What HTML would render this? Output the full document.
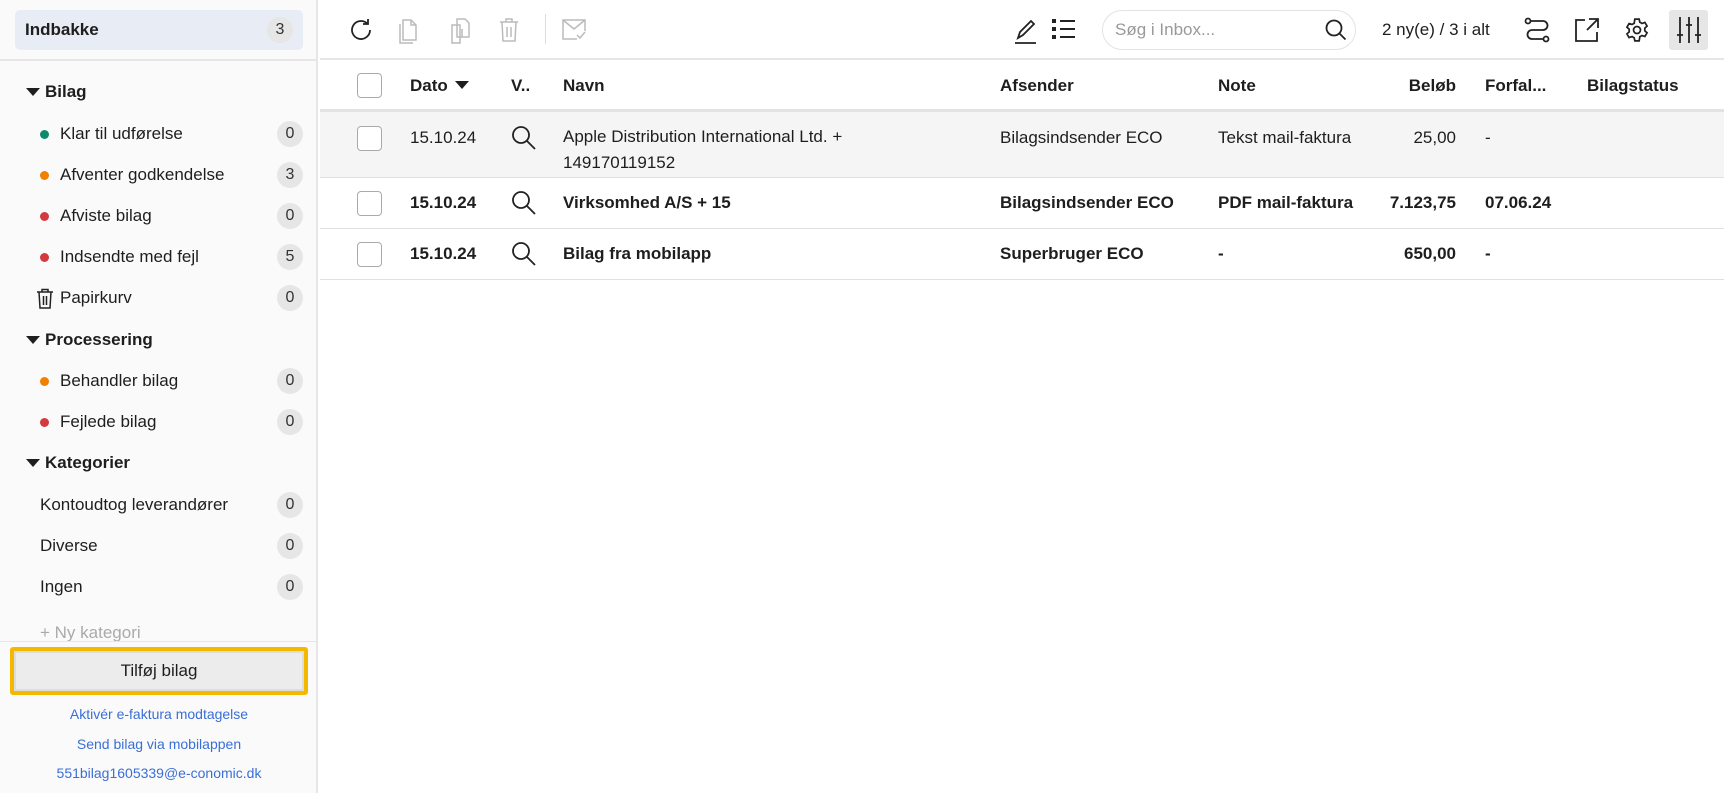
<!DOCTYPE html>
<html><head><meta charset="utf-8"><style>
*{box-sizing:border-box;margin:0;padding:0}
body{width:1724px;height:793px;overflow:hidden;font-family:"Liberation Sans",Arial,sans-serif;color:#1e1e1e;background:#fff;position:relative}
.sb{position:absolute;left:0;top:0;width:318px;height:793px;background:#fafafa;border-right:2px solid #e6e6e6}
.inb{position:absolute;left:15px;top:10px;width:288px;height:40px;background:#e8ecf5;border-radius:5px;font-weight:bold;font-size:17px;line-height:40px;padding-left:10px}
.badge{position:absolute;right:10px;top:50%;margin-top:-13px;width:26px;height:26px;border-radius:13px;background:#e6e6e6;text-align:center;line-height:26px;font-size:16px;font-weight:normal;color:#333}
.hr1{position:absolute;left:0;top:59px;width:316px;height:2px;background:#e6e6e6}
.it{position:absolute;left:0;width:303px;height:30px;font-size:17px;line-height:30px}
.it .badge{right:0}
.hd{font-weight:bold;padding-left:45px}
.hd:before{content:"";position:absolute;left:26px;top:11px;border-left:7px solid transparent;border-right:7px solid transparent;border-top:8px solid #1e1e1e}
.dot{padding-left:60px}
.dot:before{content:"";position:absolute;left:40px;top:11px;width:9px;height:9px;border-radius:5px;background:var(--c)}
.cat{padding-left:40px}
.btm{position:absolute;left:0;top:641px;width:316px;height:152px;background:#fafafa;border-top:1px solid #e6e6e6}
.btn{position:absolute;left:10px;top:5px;width:298px;height:48px;border:4px solid #f5b800;border-radius:3px;background:#ececec;box-shadow:inset 0 0 0 2px #ddd;text-align:center;line-height:40px;font-size:17px}
.lk{position:absolute;left:0;width:318px;text-align:center;color:#3a6fd8;font-size:14px}
.main{position:absolute;left:320px;top:0;right:0}
.tb{position:absolute;left:0;top:0;width:1404px;height:60px;border-bottom:2px solid #e6e6e6}
.ic{position:absolute;top:17px}
.search{position:absolute;left:782px;top:10px;width:254px;height:40px;border:1px solid #e3e3e3;border-radius:20px;font-size:17px;color:#999;line-height:38px;padding-left:12px}
.cnt{position:absolute;left:1062px;top:20px;font-size:17px}
.row{position:absolute;left:0;width:1404px;border-bottom:1px solid #e0e0e0;font-size:17px}
.cb{position:absolute;left:37px;width:25px;height:25px;border:1px solid #aaa;border-radius:4px;background:#fff}
.c{position:absolute;white-space:nowrap}
.b{font-weight:bold}
</style></head><body>
<div class="sb">
<div class="inb">Indbakke<span class="badge">3</span></div>
<div class="hr1"></div>
<div class="it hd" style="top:77px">Bilag</div>
<div class="it dot" style="top:119px;--c:#0e8a6a">Klar til udførelse<span class="badge">0</span></div>
<div class="it dot" style="top:160px;--c:#f08000">Afventer godkendelse<span class="badge">3</span></div>
<div class="it dot" style="top:201px;--c:#d23a3e">Afviste bilag<span class="badge">0</span></div>
<div class="it dot" style="top:242px;--c:#d23a3e">Indsendte med fejl<span class="badge">5</span></div>
<div class="it" style="top:283px;padding-left:60px"><svg style="position:absolute;left:36px;top:5px" width="18" height="21" viewBox="0 0 18 21" fill="none" stroke="#222" stroke-width="1.5"><path d="M1 4h16M6 4V1.5h6V4M3 4l1 16h10l1-16M7.5 8v9M10.5 8v9"/></svg>Papirkurv<span class="badge">0</span></div>
<div class="it hd" style="top:325px">Processering</div>
<div class="it dot" style="top:366px;--c:#f08000">Behandler bilag<span class="badge">0</span></div>
<div class="it dot" style="top:407px;--c:#d23a3e">Fejlede bilag<span class="badge">0</span></div>
<div class="it hd" style="top:448px">Kategorier</div>
<div class="it cat" style="top:490px">Kontoudtog leverandører<span class="badge">0</span></div>
<div class="it cat" style="top:531px">Diverse<span class="badge">0</span></div>
<div class="it cat" style="top:572px">Ingen<span class="badge">0</span></div>
<div class="it cat" style="top:618px;color:#aaa">+ Ny kategori</div>
<div class="btm">
<div class="btn">Tilføj bilag</div>
<div class="lk" style="top:64px">Aktivér e-faktura modtagelse</div>
<div class="lk" style="top:94px">Send bilag via mobilappen</div>
<div class="lk" style="top:123px">551bilag1605339@e-conomic.dk</div>
</div>
</div>
<div class="main">
<div class="tb">
<svg class="ic" style="left:28px" width="26" height="26" viewBox="0 0 26 26" fill="none" stroke="#222" stroke-width="1.8"><path d="M22 13a9 9 0 1 1-3-6.7M20 2v5h-5"/></svg>
<svg class="ic" style="left:78px" width="22" height="28" viewBox="0 0 22 28" fill="none" stroke="#bbb" stroke-width="1.5"><path d="M5 3h8l5 5v15H5zM13 3v5h5M2 7v19h13"/></svg>
<svg class="ic" style="left:129px" width="22" height="28" viewBox="0 0 22 28" fill="none" stroke="#bbb" stroke-width="1.5"><path d="M8 2h8l4 4v14H8zM3 8h8v18H3zM13 12v8"/></svg>
<svg class="ic" style="left:179px" width="20" height="26" viewBox="0 0 20 26" fill="none" stroke="#bbb" stroke-width="1.5"><path d="M1 5h18M7 5V2h6v3M3 5l1 19h12l1-19M8 10v10M12 10v10"/></svg>
<div style="position:absolute;left:225px;top:14px;width:1px;height:30px;background:#ddd"></div>
<svg class="ic" style="left:242px;top:19px" width="26" height="22" viewBox="0 0 26 22" fill="none" stroke="#bbb" stroke-width="1.5"><path d="M15 20H1V1h22v11M1 1l11 9 11-9M15 16l3 3 5-6"/></svg>
<svg class="ic" style="left:693px" width="26" height="28" viewBox="0 0 26 28" fill="none" stroke="#222" stroke-width="1.8"><path d="M5 21l2-6L18 4l3 3L10 18zM2 26h21"/></svg>
<svg class="ic" style="left:732px;top:18px" width="24" height="22" viewBox="0 0 24 22" fill="#222"><rect x="0" y="1" width="4" height="4"/><rect x="0" y="9" width="4" height="4"/><rect x="0" y="17" width="4" height="4"/><rect x="8" y="2" width="15" height="2"/><rect x="8" y="10" width="15" height="2"/><rect x="8" y="18" width="15" height="2"/></svg>
<div class="search">Søg i Inbox...<svg style="position:absolute;right:8px;top:8px" width="22" height="22" viewBox="0 0 22 22" fill="none" stroke="#222" stroke-width="1.8"><circle cx="9" cy="9" r="7.5"/><path d="M14.5 14.5l6 6"/></svg></div>
<div class="cnt">2 ny(e) / 3 i alt</div>
<svg class="ic" style="left:1204px" width="26" height="26" viewBox="0 0 26 26" fill="none" stroke="#222" stroke-width="1.8"><circle cx="4" cy="4" r="2.5"/><circle cx="22" cy="22" r="2.5"/><path d="M6.5 4H19a4.5 4.5 0 0 1 0 9H8a4.5 4.5 0 0 0 0 9h11.5"/></svg>
<svg class="ic" style="left:1254px" width="26" height="26" viewBox="0 0 26 26" fill="none" stroke="#222" stroke-width="1.8"><path d="M11 3H2v21h21v-9M15 2h9v9M24 2L13 13"/></svg>
<svg class="ic" style="left:1304px" width="26" height="26" viewBox="0 0 24 24" fill="none" stroke="#222" stroke-width="1.6"><circle cx="12" cy="12" r="3.2"/><path d="M10 2h4l.6 2.8 2 1.1 2.7-.9 2 3.4-2.1 1.9v2.4l2.1 1.9-2 3.4-2.7-.9-2 1.1L14 22h-4l-.6-2.8-2-1.1-2.7.9-2-3.4 2.1-1.9v-2.4L2.7 9.4l2-3.4 2.7.9 2-1.1z"/></svg>
<div style="position:absolute;left:1349px;top:10px;width:39px;height:40px;background:#e6e6e6;border-radius:3px"></div>
<svg class="ic" style="left:1356px;top:16px" width="26" height="28" viewBox="0 0 26 28" fill="none" stroke="#222" stroke-width="1.8"><path d="M4 1v26M13 1v26M22 1v26M1 19h6M10 9h6M19 19h6"/></svg>
</div>
<div class="row" style="top:61px;height:51px;border-bottom:3px solid #e3e3e3;font-weight:bold">
<div class="cb" style="top:12px"></div>
<div class="c" style="left:90px;top:15px">Dato <span style="display:inline-block;border-left:7px solid transparent;border-right:7px solid transparent;border-top:8px solid #1e1e1e;vertical-align:2px;margin-left:2px"></span></div>
<div class="c" style="left:191px;top:15px">V..</div>
<div class="c" style="left:243px;top:15px">Navn</div>
<div class="c" style="left:680px;top:15px">Afsender</div>
<div class="c" style="left:898px;top:15px">Note</div>
<div class="c" style="right:268px;top:15px">Beløb</div>
<div class="c" style="left:1165px;top:15px">Forfal...</div>
<div class="c" style="left:1267px;top:15px">Bilagstatus</div>
</div>
<div class="row" style="top:112px;height:66px;background:#f5f5f5">
<div class="cb" style="top:14px"></div>
<div class="c" style="left:90px;top:16px">15.10.24</div>
<svg class="c" style="left:191px;top:13px" width="26" height="26" viewBox="0 0 26 26" fill="none" stroke="#222" stroke-width="1.8"><circle cx="10" cy="10" r="8"/><path d="M16 16l8 8"/></svg>
<div class="c" style="left:243px;top:12px;line-height:26px">Apple Distribution International Ltd. +<br>149170119152</div>
<div class="c" style="left:680px;top:16px">Bilagsindsender ECO</div>
<div class="c" style="left:898px;top:16px">Tekst mail-faktura</div>
<div class="c" style="right:268px;top:16px">25,00</div>
<div class="c" style="left:1165px;top:16px">-</div>
</div>
<div class="row b" style="top:178px;height:51px">
<div class="cb" style="top:13px"></div>
<div class="c" style="left:90px;top:15px">15.10.24</div>
<svg class="c" style="left:191px;top:12px" width="26" height="26" viewBox="0 0 26 26" fill="none" stroke="#222" stroke-width="1.8"><circle cx="10" cy="10" r="8"/><path d="M16 16l8 8"/></svg>
<div class="c" style="left:243px;top:15px">Virksomhed A/S + 15</div>
<div class="c" style="left:680px;top:15px">Bilagsindsender ECO</div>
<div class="c" style="left:898px;top:15px">PDF mail-faktura</div>
<div class="c" style="right:268px;top:15px">7.123,75</div>
<div class="c" style="left:1165px;top:15px">07.06.24</div>
</div>
<div class="row b" style="top:229px;height:51px">
<div class="cb" style="top:13px"></div>
<div class="c" style="left:90px;top:15px">15.10.24</div>
<svg class="c" style="left:191px;top:12px" width="26" height="26" viewBox="0 0 26 26" fill="none" stroke="#222" stroke-width="1.8"><circle cx="10" cy="10" r="8"/><path d="M16 16l8 8"/></svg>
<div class="c" style="left:243px;top:15px">Bilag fra mobilapp</div>
<div class="c" style="left:680px;top:15px">Superbruger ECO</div>
<div class="c" style="left:898px;top:15px">-</div>
<div class="c" style="right:268px;top:15px">650,00</div>
<div class="c" style="left:1165px;top:15px">-</div>
</div>
</div>
</body></html>
